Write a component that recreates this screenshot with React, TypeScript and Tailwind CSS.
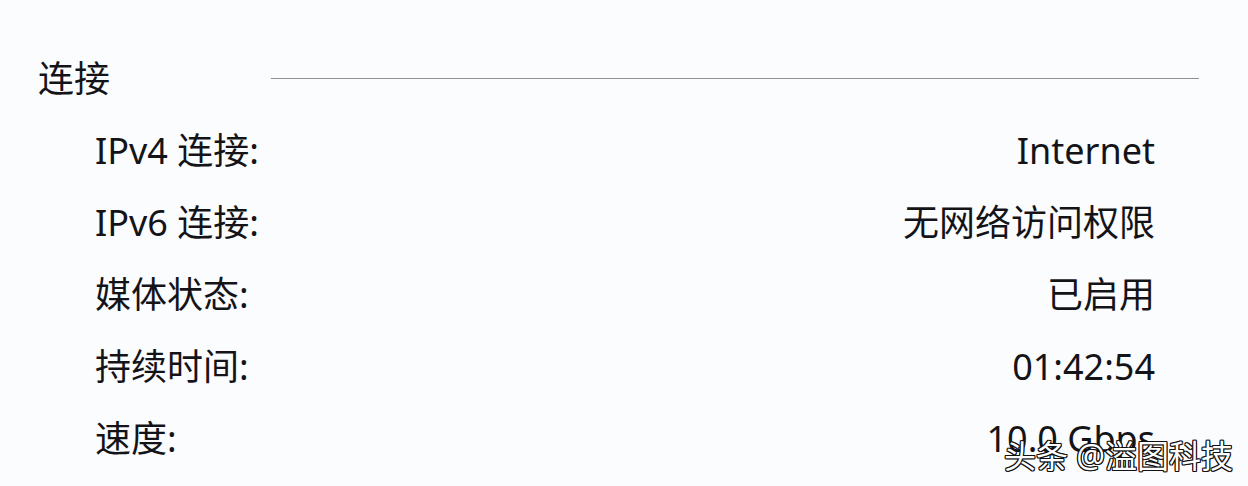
import React from "react";

const rows: [string, string][] = [
  ["IPv4 连接:", "Internet"],
  ["IPv6 连接:", "无网络访问权限"],
  ["媒体状态:", "已启用"],
  ["持续时间:", "01:42:54"],
  ["速度:", "10.0 Gbps"],
];

export default function App() {
  return (
    <div
      className="relative w-[1248px] h-[486px] overflow-hidden bg-[#fbfcfe] text-[#141418]"
      style={{ fontFamily: '"Noto Sans", "Noto Sans CJK SC", sans-serif' }}
    >
      <div className="mt-[42px] h-[73px] flex items-center pl-[38px] pr-[49px]">
        <span className="text-[36px] leading-[73px] w-[233px]">连接</span>
        <div className="flex-1 h-px bg-[#8e9098]" />
      </div>
      <div className="flex flex-col pl-[95px] pr-[93px]">
        {rows.map(([k, v]) => (
          <div key={k} className="h-[72px] flex items-center justify-between text-[36px] leading-[72px]">
            <span>{k}</span>
            <span>{v}</span>
          </div>
        ))}
      </div>
      <div
        className="absolute left-[1004px] top-[436px] text-[32px] leading-[40px] text-white whitespace-nowrap"
        style={{
          textShadow:
            "1px 1px 0 #111, -1px -1px 0 #111, 1px -1px 0 #111, -1px 1px 0 #111, 0 1px 0 #111, 0 -1px 0 #111, 1px 0 0 #111, -1px 0 0 #111",
        }}
      >
        头条 @溢图科技
      </div>
    </div>
  );
}
